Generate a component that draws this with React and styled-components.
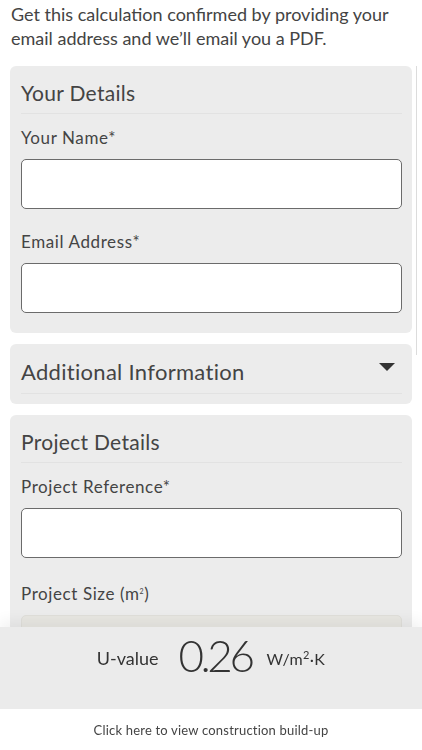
import React from "react";
import styled, { createGlobalStyle } from "styled-components";

const Global = createGlobalStyle`
  html, body { margin: 0; padding: 0; background: #fff; }
  body { font-family: "Lato", "Open Sans", sans-serif; color: #444; }
  * { box-sizing: border-box; }
`;

const Page = styled.div`
  padding: 0 10px 160px 10px;
  display: flex;
  flex-direction: column;
`;

const Intro = styled.p`
  margin: 2px 0 16px 1px;
  font-size: 18px;
  line-height: 24px;
  letter-spacing: 0;
  color: #444;
`;

const Card = styled.section`
  background: #ececec;
  border-radius: 6px;
  padding: 0 10px ${(p) => p.$pb ?? 20}px 11px;
  margin-bottom: 11px;
  display: flex;
  flex-direction: column;
`;

const CardHeader = styled.div`
  display: flex;
  align-items: center;
  justify-content: space-between;
  height: ${(p) => p.$h ?? 48}px;
  padding-top: 6px;
  border-bottom: 1px solid #e2e2e2;
  margin-bottom: ${(p) => p.$mb ?? 10}px;
`;

const CardTitle = styled.h2`
  margin: 0;
  font-weight: 400;
  font-size: ${(p) => p.$size ?? 21}px;
  letter-spacing: 0.3px;
  color: #444;
`;

const Caret = styled.span`
  width: 0;
  height: 0;
  border-left: 8px solid transparent;
  border-right: 8px solid transparent;
  border-top: 8px solid #333;
  margin-right: 7px;
  margin-top: -10px;
`;

const Label = styled.label`
  display: block;
  font-size: 17px;
  line-height: 20px;
  letter-spacing: 0.6px;
  color: #444;
  margin: 4px 0 11px 0;
`;

const Input = styled.input`
  display: block;
  width: 100%;
  height: 50px;
  background: ${(p) => (p.$muted ? "#e8e7e2" : "#fff")};
  border: 1px solid ${(p) => (p.$muted ? "#e0dfda" : "#6b6b6b")};
  border-radius: 5px;
  margin-bottom: ${(p) => p.$mb ?? 19}px;
  font: inherit;
`;

const Sup = styled.sup`
  font-size: 7px;
  vertical-align: 6px;
`;

const ScrollBar = styled.div`
  position: absolute;
  left: 416px;
  top: 66px;
  width: 1px;
  height: 289px;
  background: #dcdcdc;
`;

const Footer = styled.div`
  position: fixed;
  left: 0;
  right: 0;
  bottom: 0;
  display: flex;
  flex-direction: column;
`;

const ValueBar = styled.div`
  height: 82px;
  background: #ebebeb;
  display: flex;
  align-items: center;
  justify-content: center;
  padding-bottom: 26px;
  padding-left: 0;
  box-shadow: 0 -6px 14px rgba(0, 0, 0, 0.06);
`;

const ValueLabel = styled.span`
  font-size: 18px;
  color: #333;
  margin-right: 20px;
  margin-top: 6px;
`;

const ValueNumber = styled.span`
  font-size: 44px;
  font-weight: 300;
  color: #333;
  margin-right: 15px;
  letter-spacing: -3.5px;
`;

const ValueUnit = styled.span`
  font-size: 16px;
  color: #333;
  margin-top: 6px;
  letter-spacing: 0.3px;
  sup {
    font-size: 11px;
    vertical-align: 6px;
  }
`;

const LinkRow = styled.div`
  height: 41px;
  background: #fff;
  display: flex;
  align-items: center;
  justify-content: center;
  font-size: 13px;
  letter-spacing: 0.2px;
  color: #444;
`;

export default function App() {
  return (
    <>
      <Global />
      <Page>
        <Intro>
          Get this calculation confirmed by providing your email address and
          we’ll email you a PDF.
        </Intro>
        <Card>
          <CardHeader>
            <CardTitle>Your Details</CardTitle>
          </CardHeader>
          <Label>Your Name*</Label>
          <Input />
          <Label>Email Address*</Label>
          <Input $mb={0} />
        </Card>
        <Card $pb={10}>
          <CardHeader $mb={0} $h={50}>
            <CardTitle $size={22}>Additional Information</CardTitle>
            <Caret />
          </CardHeader>
        </Card>
        <Card>
          <CardHeader>
            <CardTitle>Project Details</CardTitle>
          </CardHeader>
          <Label>Project Reference*</Label>
          <Input />
          <Label>
            Project Size (m<Sup>2</Sup>)
          </Label>
          <Input $muted />
        </Card>
      </Page>
      <ScrollBar />
      <Footer>
        <ValueBar>
          <ValueLabel>U-value</ValueLabel>
          <ValueNumber>0.26</ValueNumber>
          <ValueUnit>
            W/m<sup>2</sup>·K
          </ValueUnit>
        </ValueBar>
        <LinkRow>Click here to view construction build-up</LinkRow>
      </Footer>
    </>
  );
}
